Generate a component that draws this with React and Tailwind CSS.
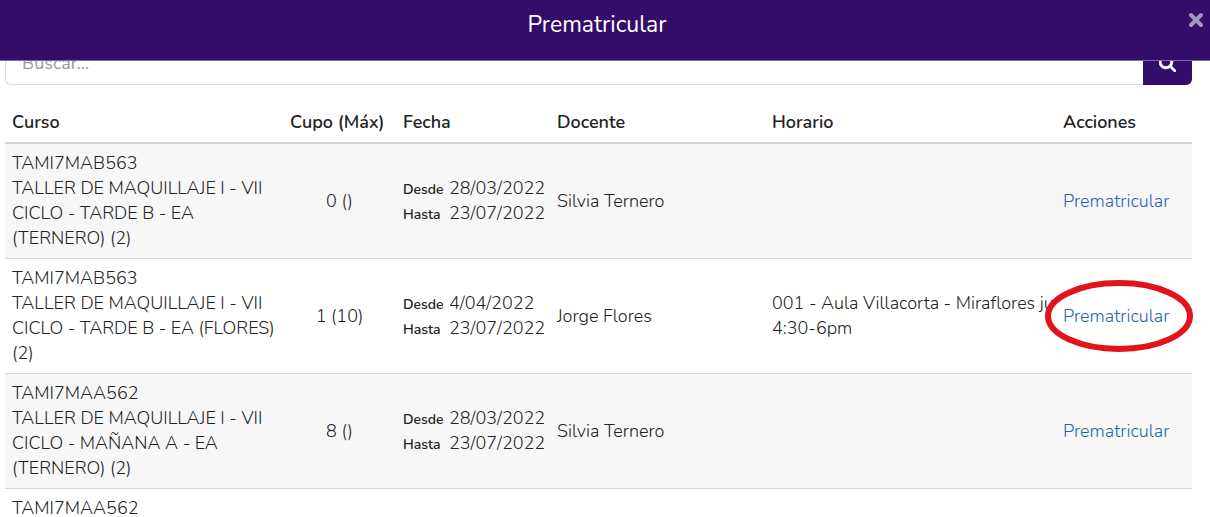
import { FaMagnifyingGlass } from "react-icons/fa6";

const COURSES = [
  {
    id: 1,
    code: "TAMI7MAB563",
    name: ["TALLER DE MAQUILLAJE I - VII", "CICLO - TARDE B - EA", "(TERNERO) (2)"],
    quota: "0 ()",
    from: "28/03/2022",
    to: "23/07/2022",
    teacher: "Silvia Ternero",
    schedule: [],
  },
  {
    id: 2,
    code: "TAMI7MAB563",
    name: ["TALLER DE MAQUILLAJE I - VII", "CICLO - TARDE B - EA (FLORES)", "(2)"],
    quota: "1 (10)",
    from: "4/04/2022",
    to: "23/07/2022",
    teacher: "Jorge Flores",
    schedule: ["001 - Aula Villacorta - Miraflores ju", "4:30-6pm"],
    highlighted: true,
  },
  {
    id: 3,
    code: "TAMI7MAA562",
    name: ["TALLER DE MAQUILLAJE I - VII", "CICLO - MAÑANA A - EA", "(TERNERO) (2)"],
    quota: "8 ()",
    from: "28/03/2022",
    to: "23/07/2022",
    teacher: "Silvia Ternero",
    schedule: [],
  },
  {
    id: 4,
    code: "TAMI7MAA562",
    name: [],
    schedule: [],
  },
];

function DateLine({ label, value }) {
  return (
    <div className="flex items-baseline">
      <span className="w-[46px] shrink-0 text-sm font-semibold">{label}</span>
      <span>{value}</span>
    </div>
  );
}

function CourseRow({ course }) {
  return (
    <tr className="border-b border-[#d8d8d8] odd:bg-[#f7f7f7]">
      <td className="px-[7px] py-[7px] whitespace-nowrap">
        <div>{course.code}</div>
        {course.name.map((line) => (
          <div key={line}>{line}</div>
        ))}
      </td>
      <td className="px-[7px] text-center">{course.quota}</td>
      <td className="px-[7px]">
        {course.from ? (
          <>
            <DateLine label="Desde" value={course.from} />
            <DateLine label="Hasta" value={course.to} />
          </>
        ) : null}
      </td>
      <td className="px-[7px]">{course.teacher}</td>
      <td className="px-[7px] whitespace-nowrap">
        {course.schedule.map((line) => (
          <div key={line}>{line}</div>
        ))}
      </td>
      <td className="px-[7px]">
        {course.teacher ? (
          <span className="relative inline-block">
            <a href="#prematricular" className="text-[#1f66ad]">
              Prematricular
            </a>
            {course.highlighted ? (
              <svg
                className="pointer-events-none absolute top-1/2 -left-[18px] h-[72px] w-[148px] max-w-none -translate-y-1/2"
                viewBox="0 0 148 72"
                fill="none"
                aria-hidden="true"
              >
                <ellipse cx="74" cy="36" rx="71" ry="33" stroke="#e3131b" strokeWidth="6" />
              </svg>
            ) : null}
          </span>
        ) : null}
      </td>
    </tr>
  );
}

export default function App() {
  return (
    <div className="flex h-screen flex-col overflow-hidden bg-white font-['Nunito','Lato',sans-serif] text-lg leading-[25px] text-[#222222]">
      <header className="relative z-10 flex h-[61px] shrink-0 items-start justify-center border-b border-[#8468ad] bg-[#340d6b] pt-3 pr-4">
        <h1 className="text-[23px] leading-[25px] text-white">Prematricular</h1>
        <button type="button" aria-label="Cerrar" className="absolute top-3 right-1.5 text-[#a596c0]">
          <svg className="size-4" viewBox="0 0 16 16" fill="none" aria-hidden="true">
            <path d="M3 3l10 10M13 3L3 13" stroke="currentColor" strokeWidth="4" strokeLinecap="round" />
          </svg>
        </button>
      </header>

      <main className="-mt-5 pr-[18px] pl-[5px]">
        <form className="flex h-11">
          <input
            type="text"
            aria-label="Buscar"
            placeholder="Buscar..."
            className="min-w-0 flex-1 rounded-l-md border border-r-0 border-[#dcdcdc] px-4 outline-none placeholder:text-[#999999]"
          />
          <button
            type="submit"
            aria-label="Buscar cursos"
            className="flex w-[49px] items-center justify-center rounded-r-md bg-[#340d6b] text-white"
          >
            <FaMagnifyingGlass className="size-[17px]" stroke="currentColor" strokeWidth="24" aria-hidden="true" />
          </button>
        </form>

        <table className="mt-4 w-full table-fixed border-collapse font-light">
          <colgroup>
            <col className="w-[278px]" />
            <col className="w-[113px]" />
            <col className="w-[154px]" />
            <col className="w-[215px]" />
            <col />
            <col className="w-[136px]" />
          </colgroup>
          <thead>
            <tr className="border-b-2 border-[#d3d3d3] text-left">
              <th className="px-[7px] pt-[9px] pb-[7px] font-semibold">Curso</th>
              <th className="px-[7px] pt-[9px] pb-[7px] font-semibold whitespace-nowrap">Cupo (Máx)</th>
              <th className="px-[7px] pt-[9px] pb-[7px] font-semibold">Fecha</th>
              <th className="px-[7px] pt-[9px] pb-[7px] font-semibold">Docente</th>
              <th className="px-[7px] pt-[9px] pb-[7px] font-semibold">Horario</th>
              <th className="px-[7px] pt-[9px] pb-[7px] font-semibold">Acciones</th>
            </tr>
          </thead>
          <tbody>
            {COURSES.map((course) => (
              <CourseRow key={course.id} course={course} />
            ))}
          </tbody>
        </table>
      </main>
    </div>
  );
}
